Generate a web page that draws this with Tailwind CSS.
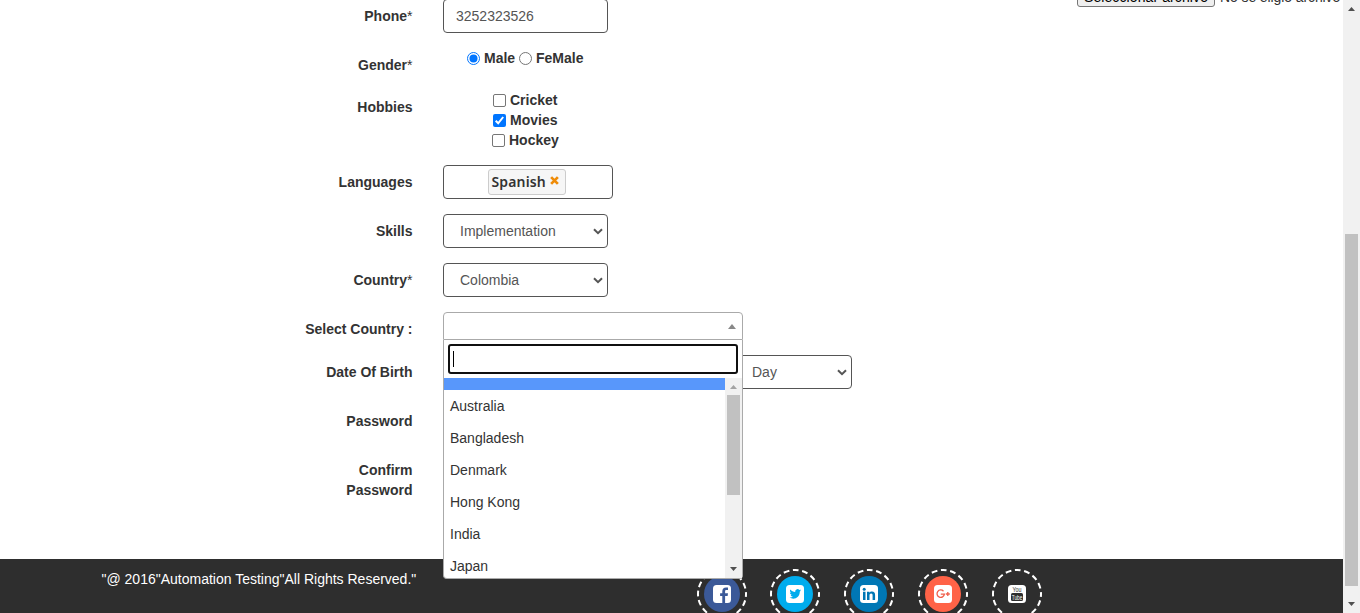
<!DOCTYPE html>
<html lang="en">
<head>
<meta charset="utf-8">
<title>Register</title>
<script src="https://cdn.jsdelivr.net/npm/@tailwindcss/browser@4"></script>
</head>
<body class="h-[613px] w-[1360px] overflow-hidden bg-white font-['Liberation_Sans',Arial,sans-serif] text-sm leading-5 text-[#333]">
<svg class="hidden">
  <symbol id="chev" viewBox="0 0 10 7"><path d="M1 1.2 5 5.2 9 1.2" fill="none" stroke="#555" stroke-width="2"/></symbol>
</svg>
<div class="flex h-[613px]">
  <div class="flex w-[1343px] flex-col">
    <main class="relative flex h-[559px] shrink-0 flex-col">
      <!-- file picker, scrolled mostly out of view -->
      <div class="absolute left-[1077px] -top-[15px] flex h-[22px] items-center gap-[5px] whitespace-nowrap text-black">
        <div class="flex h-[22px] w-[138px] items-center justify-center rounded-[3px] border border-[#767676] bg-[#efefef] pt-0.5 tracking-[0.1px]">Seleccionar archivo</div>
        <span class="pt-0.5 tracking-[-0.1px] text-[#333]">No se eligió archivo</span>
      </div>

      <div class="-mt-px flex h-[49px]">
        <div class="w-[443px] pr-[30.5px] pt-[7px] text-right font-bold">Phone<span class="font-normal">*</span></div>
        <div class="flex h-[34px] w-[165px] items-center rounded border border-[#555] px-3 text-[#555]">3252323526</div>
      </div>

      <div class="flex h-[42px]">
        <div class="w-[443px] pr-[30.5px] pt-[7px] text-right font-bold">Gender<span class="font-normal">*</span></div>
        <div class="flex h-5 items-center pl-6 font-bold">
          <svg class="size-[13px]" viewBox="0 0 13 13"><circle cx="6.5" cy="6.5" r="6" fill="#fff" stroke="#0075ff"/><circle cx="6.5" cy="6.5" r="4" fill="#0075ff"/></svg>
          <span class="ml-1 w-[35px] whitespace-nowrap">Male</span>
          <svg class="size-[13px]" viewBox="0 0 13 13"><circle cx="6.5" cy="6.5" r="6" fill="#fff" stroke="#767676"/></svg>
          <span class="ml-1">FeMale</span>
        </div>
      </div>

      <div class="flex h-[75px]">
        <div class="w-[443px] pr-[30.5px] pt-[7px] text-right font-bold">Hobbies</div>
        <div class="flex flex-col pl-[49px] font-bold">
          <div class="flex h-5 items-center gap-1 pl-px"><span class="size-[13px] rounded-[2px] border border-[#767676]"></span>Cricket</div>
          <div class="flex h-5 items-center gap-1 pl-px"><svg class="size-[13px]" viewBox="0 0 13 13"><rect width="13" height="13" rx="2" fill="#0075ff"/><path d="M2.7 6.7 5.2 9.3 10.2 3" fill="none" stroke="#fff" stroke-width="2"/></svg>Movies</div>
          <div class="flex h-5 items-center gap-1"><span class="size-[13px] rounded-[2px] border border-[#767676]"></span>Hockey</div>
        </div>
      </div>

      <div class="flex h-[49px]">
        <div class="w-[443px] pr-[30.5px] pt-[7px] text-right font-bold">Languages</div>
        <div class="flex h-[34px] w-[170px] items-center rounded border border-[#555] pl-11">
          <div class="flex h-[26px] w-[78px] rounded-[3px] border border-[#ccc] bg-[#f6f6f6] pl-[2.5px] font-['Noto_Sans','Open_Sans',sans-serif] font-semibold leading-6 tracking-[0.15px]">
            <span class="w-[58px]">Spanish</span>
            <svg class="mt-[5.5px] size-[9px]" viewBox="0 0 8 8"><path d="M1 1 7 7M7 1 1 7" stroke="#ef8c08" stroke-width="2.4"/></svg>
          </div>
        </div>
      </div>

      <div class="flex h-[49px]">
        <div class="w-[443px] pr-[30.5px] pt-[7px] text-right font-bold">Skills</div>
        <div class="flex h-[34px] w-[165px] items-center justify-between rounded border border-[#555] pl-4 pr-1 text-[#555]">Implementation<svg class="h-[7px] w-[10px]"><use href="#chev"/></svg></div>
      </div>

      <div class="flex h-[49px]">
        <div class="w-[443px] pr-[30.5px] pt-[7px] text-right font-bold">Country<span class="font-normal">*</span></div>
        <div class="flex h-[34px] w-[165px] items-center justify-between rounded border border-[#555] pl-4 pr-1 text-[#555]">Colombia<svg class="h-[7px] w-[10px]"><use href="#chev"/></svg></div>
      </div>

      <div class="flex h-[43px]">
        <div class="w-[443px] pr-[30.5px] pt-[7px] text-right font-bold">Select Country :</div>
        <div class="relative h-7 w-[300px] rounded-t border border-[#aaa]">
          <svg class="absolute top-[11px] right-[6px] h-[5px] w-2" viewBox="0 0 8 5"><path d="M0 5 4 0 8 5Z" fill="#888"/></svg>
          <!-- open dropdown -->
          <div class="absolute -left-px top-[27px] z-10 flex h-[239px] w-[300px] flex-col rounded-b border border-t-0 border-[#aaa] bg-white">
            <div class="px-1 pt-[4px]">
              <div class="flex h-[30px] items-center rounded-[3px] border-2 border-[#101010] pl-[3px]"><span class="h-4 w-px bg-black"></span></div>
            </div>
            <div class="mt-1 flex h-[200px] overflow-hidden">
              <div class="w-[281px]">
                <div class="h-3 bg-[#5897fb]"></div>
                <div class="h-8 p-1.5">Australia</div>
                <div class="h-8 p-1.5">Bangladesh</div>
                <div class="h-8 p-1.5">Denmark</div>
                <div class="h-8 p-1.5">Hong Kong</div>
                <div class="h-8 p-1.5">India</div>
                <div class="h-8 p-1.5">Japan</div>
              </div>
              <div class="flex w-[17px] flex-col items-center bg-[#f1f1f1]">
                <svg class="mt-[7px] h-1 w-[7px]" viewBox="0 0 7 4"><path d="M0 4 3.5 0 7 4Z" fill="#a3a3a3"/></svg>
                <div class="mt-[6px] h-[100px] w-[13px] bg-[#c1c1c1]"></div>
                <svg class="mt-[72px] h-1 w-[7px] shrink-0" viewBox="0 0 7 4"><path d="M0 0 3.5 4 7 0Z" fill="#505050"/></svg>
              </div>
            </div>
          </div>
        </div>
      </div>

      <div class="flex h-[49px]">
        <div class="w-[443px] pr-[30.5px] pt-[7px] text-right font-bold">Date Of Birth</div>
        <div class="ml-[292px] flex h-[34px] w-[117px] items-center justify-between rounded border border-[#555] pl-4 pr-1 text-[#555]">Day<svg class="h-[7px] w-[10px]"><use href="#chev"/></svg></div>
      </div>
      <div class="h-[49px] w-[443px] pr-[30.5px] pt-[7px] text-right font-bold">Password</div>
      <div class="w-[443px] pr-[30.5px] pt-[7px] text-right font-bold">Confirm<br>Password</div>
    </main>

    <footer class="flex h-[54px] shrink-0 overflow-hidden bg-[#2e2e2e] text-white">
      <div class="w-[696.6px] pt-[10px] pl-[101.5px]">"@ 2016"Automation Testing"All Rights Reserved."</div>
      <div class="flex gap-[23.75px] pt-[10px]">
        <svg class="size-[50px] shrink-0" viewBox="0 0 50 50"><circle cx="25" cy="25" r="24" fill="none" stroke="#fff" stroke-width="2" stroke-dasharray="5.8 3.625" stroke-dashoffset="2.9"/><circle cx="25" cy="25" r="18" fill="#3b5998"/><rect x="16" y="16" width="18" height="18" rx="3.5" fill="#fff"/><path d="M25.3 34v-7h-2.2v-2.8h2.2v-1.9c0-2.4 1.4-3.8 3.7-3.8h2v2.6h-1.4c-1.1 0-1.5.5-1.5 1.4v1.7h2.9l-.4 2.8h-2.5v7Z" fill="#3b5998"/></svg>
        <svg class="size-[50px] shrink-0" viewBox="0 0 50 50"><circle cx="25" cy="25" r="24" fill="none" stroke="#fff" stroke-width="2" stroke-dasharray="5.8 3.625" stroke-dashoffset="2.9"/><circle cx="25" cy="25" r="18" fill="#00aced"/><rect x="16" y="16" width="18" height="18" rx="3.5" fill="#fff"/><path d="M31 21.2c-.4.2-.8.3-1.2.4.4-.3.8-.7.9-1.2-.4.2-.9.4-1.4.5a2.4 2.4 0 0 0-4.1 2.1c-2-.1-3.7-1-4.9-2.4-.6 1.1-.3 2.5.7 3.2-.4 0-.8-.1-1.1-.3 0 1.2.8 2.1 1.9 2.4-.4.1-.7.1-1.1 0 .3 1 1.2 1.6 2.3 1.7-1 .8-2.2 1.1-3.5 1 4.8 3 10.4-.3 10.3-6.1.5-.4.9-.8 1.2-1.3Z" fill="#00aced"/></svg>
        <svg class="size-[50px] shrink-0" viewBox="0 0 50 50"><circle cx="25" cy="25" r="24" fill="none" stroke="#fff" stroke-width="2" stroke-dasharray="5.8 3.625" stroke-dashoffset="2.9"/><circle cx="25" cy="25" r="18" fill="#0077b5"/><rect x="16" y="16" width="18" height="18" rx="3.5" fill="#fff"/><g fill="#0077b5"><circle cx="20.2" cy="20.2" r="1.5"/><path d="M19 22.7h2.5V31H19ZM23 22.7h2.4v1.1c.5-.8 1.3-1.3 2.6-1.3 2.2 0 3.1 1.4 3.1 3.6V31h-2.5v-4.5c0-1.2-.4-1.9-1.4-1.9-1.2 0-1.7.8-1.7 2V31H23Z"/></g></svg>
        <svg class="size-[50px] shrink-0" viewBox="0 0 50 50"><circle cx="25" cy="25" r="24" fill="none" stroke="#fff" stroke-width="2" stroke-dasharray="5.8 3.625" stroke-dashoffset="2.9"/><circle cx="25" cy="25" r="18" fill="#ff6347"/><rect x="16" y="16" width="18" height="18" rx="3.5" fill="#fff"/><path d="M25.5 22.2a3.7 3.7 0 1 0 .9 3H22.8M29.8 23v4M27.8 25h4" fill="none" stroke="#f0604c" stroke-width="1.3"/></svg>
        <svg class="size-[50px] shrink-0" viewBox="0 0 50 50"><circle cx="25" cy="25" r="24" fill="none" stroke="#fff" stroke-width="2" stroke-dasharray="5.8 3.625" stroke-dashoffset="2.9"/><rect x="16" y="16" width="18" height="18" rx="3.5" fill="#fff"/><rect x="19" y="24" width="12" height="8" rx="1.5" fill="#2e2e2e"/><g font-family="Liberation Sans" text-anchor="middle"><text x="25" y="23.2" font-size="8" textLength="9" lengthAdjust="spacingAndGlyphs" fill="#2e2e2e">You</text><text x="25" y="30.8" font-size="7.5" textLength="10.5" lengthAdjust="spacingAndGlyphs" fill="#fff">Tube</text></g></svg>
      </div>
    </footer>
  </div>
  <!-- page scrollbar -->
  <div class="flex w-[17px] flex-col items-center bg-[#f1f1f1]">
    <svg class="mt-[7px] h-1 w-[7px]" viewBox="0 0 7 4"><path d="M0 4 3.5 0 7 4Z" fill="#505050"/></svg>
    <div class="mt-[223px] h-[352px] w-[13px] bg-[#c1c1c1]"></div>
    <svg class="mt-4 h-1 w-[7px]" viewBox="0 0 7 4"><path d="M0 0 3.5 4 7 0Z" fill="#505050"/></svg>
  </div>
</div>
</body>
</html>
